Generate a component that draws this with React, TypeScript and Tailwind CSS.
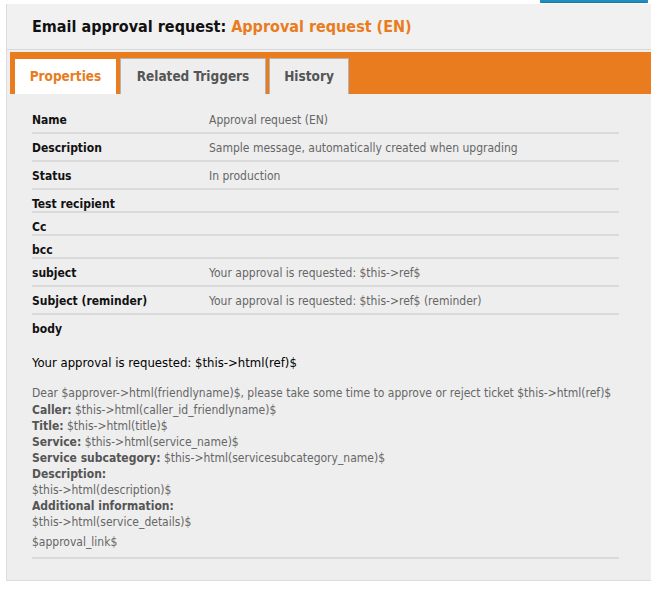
import React from "react";

const font = { fontFamily: "'DejaVu Sans Condensed', 'DejaVu Sans', sans-serif" };

type Row = { label: string; value?: string };

const rows: Row[] = [
  { label: "Name", value: "Approval request (EN)" },
  { label: "Description", value: "Sample message, automatically created when upgrading" },
  { label: "Status", value: "In production" },
  { label: "Test recipient" },
  { label: "Cc" },
  { label: "bcc" },
  { label: "subject", value: "Your approval is requested: $this->ref$" },
  { label: "Subject (reminder)", value: "Your approval is requested: $this->ref$ (reminder)" },
];

export default function App() {
  return (
    <div className="w-[651px] h-[589px] bg-white overflow-hidden font-stretch-condensed" style={font}>
      <div className="h-[4px] flex justify-end">
        <div className="w-[108px] h-[3px] mr-[3px] bg-[#1f8fbf] border-b border-[#177aa6] rounded-b-[1px]" />
      </div>
      <div className="ml-[6px] border-l border-b border-[#dcdcdc] bg-[#eeeeee] h-[577px]">
        <div className="h-[46px] bg-[#f1f1f1] border-b border-[#d9d9d9] flex items-center pl-[25px] pt-[1px]">
          <h1 className="text-[16px] font-bold text-[#111] leading-none">
            Email approval request: <span className="text-[#e87c1e]">Approval request (EN)</span>
          </h1>
        </div>
        <div className="mt-[2px] ml-[3px] h-[42px] bg-[#e87c1e] flex items-end pl-[5px] gap-[4px]">
          <div className="w-[101px] h-[35px] bg-white flex items-center justify-center text-[13.5px] font-bold text-[#e87c1e]">
            Properties
          </div>
          <div className="w-[146px] h-[36px] bg-[#eeeeee] border border-[#b3b3b3] border-b-0 flex items-center justify-center text-[13.5px] font-bold text-[#555]">
            Related Triggers
          </div>
          <div className="w-[80px] h-[36px] bg-[#eeeeee] border border-[#b3b3b3] border-b-0 flex items-center justify-center text-[13.5px] font-bold text-[#555] -ml-[1px]">
            History
          </div>
        </div>
        <div className="pl-[25px] pr-[26px] pt-[12px] text-[12px] leading-[14px]">
          <div className="w-[587px]">
            {rows.map((r) => (
              <div key={r.label} className="flex border-b-2 border-[#dadada]">
                <div className={`w-[177px] pt-[7px] font-bold text-[#111] ${r.value ? "pb-[5px]" : "pb-0"}`}>
                  {r.label}
                </div>
                <div className="pt-[7px] text-[#666]">{r.value}</div>
              </div>
            ))}
            <div className="pt-[7px] font-bold text-[#111]">body</div>
            <div className="pt-[19px] text-[13px] leading-[16px] text-black">
              Your approval is requested: $this-&gt;html(ref)$
            </div>
            <div className="pt-[14px] pb-[7px] text-[#666] leading-[16px] border-b-2 border-[#dadada]">
              <p>Dear $approver-&gt;html(friendlyname)$, please take some time to approve or reject ticket $this-&gt;html(ref)$</p>
              <p className="mt-[1px]">
                <b className="text-[#555]">Caller:</b> $this-&gt;html(caller_id_friendlyname)$
                <br />
                <b className="text-[#555]">Title:</b> $this-&gt;html(title)$
                <br />
                <b className="text-[#555]">Service:</b> $this-&gt;html(service_name)$
                <br />
                <b className="text-[#555]">Service subcategory:</b> $this-&gt;html(servicesubcategory_name)$
                <br />
                <b className="text-[#555]">Description:</b>
                <br />
                $this-&gt;html(description)$
                <br />
                <b className="text-[#555]">Additional information:</b>
                <br />
                $this-&gt;html(service_details)$
              </p>
              <p className="mt-[4px]">$approval_link$</p>
            </div>
          </div>
        </div>
      </div>
    </div>
  );
}
